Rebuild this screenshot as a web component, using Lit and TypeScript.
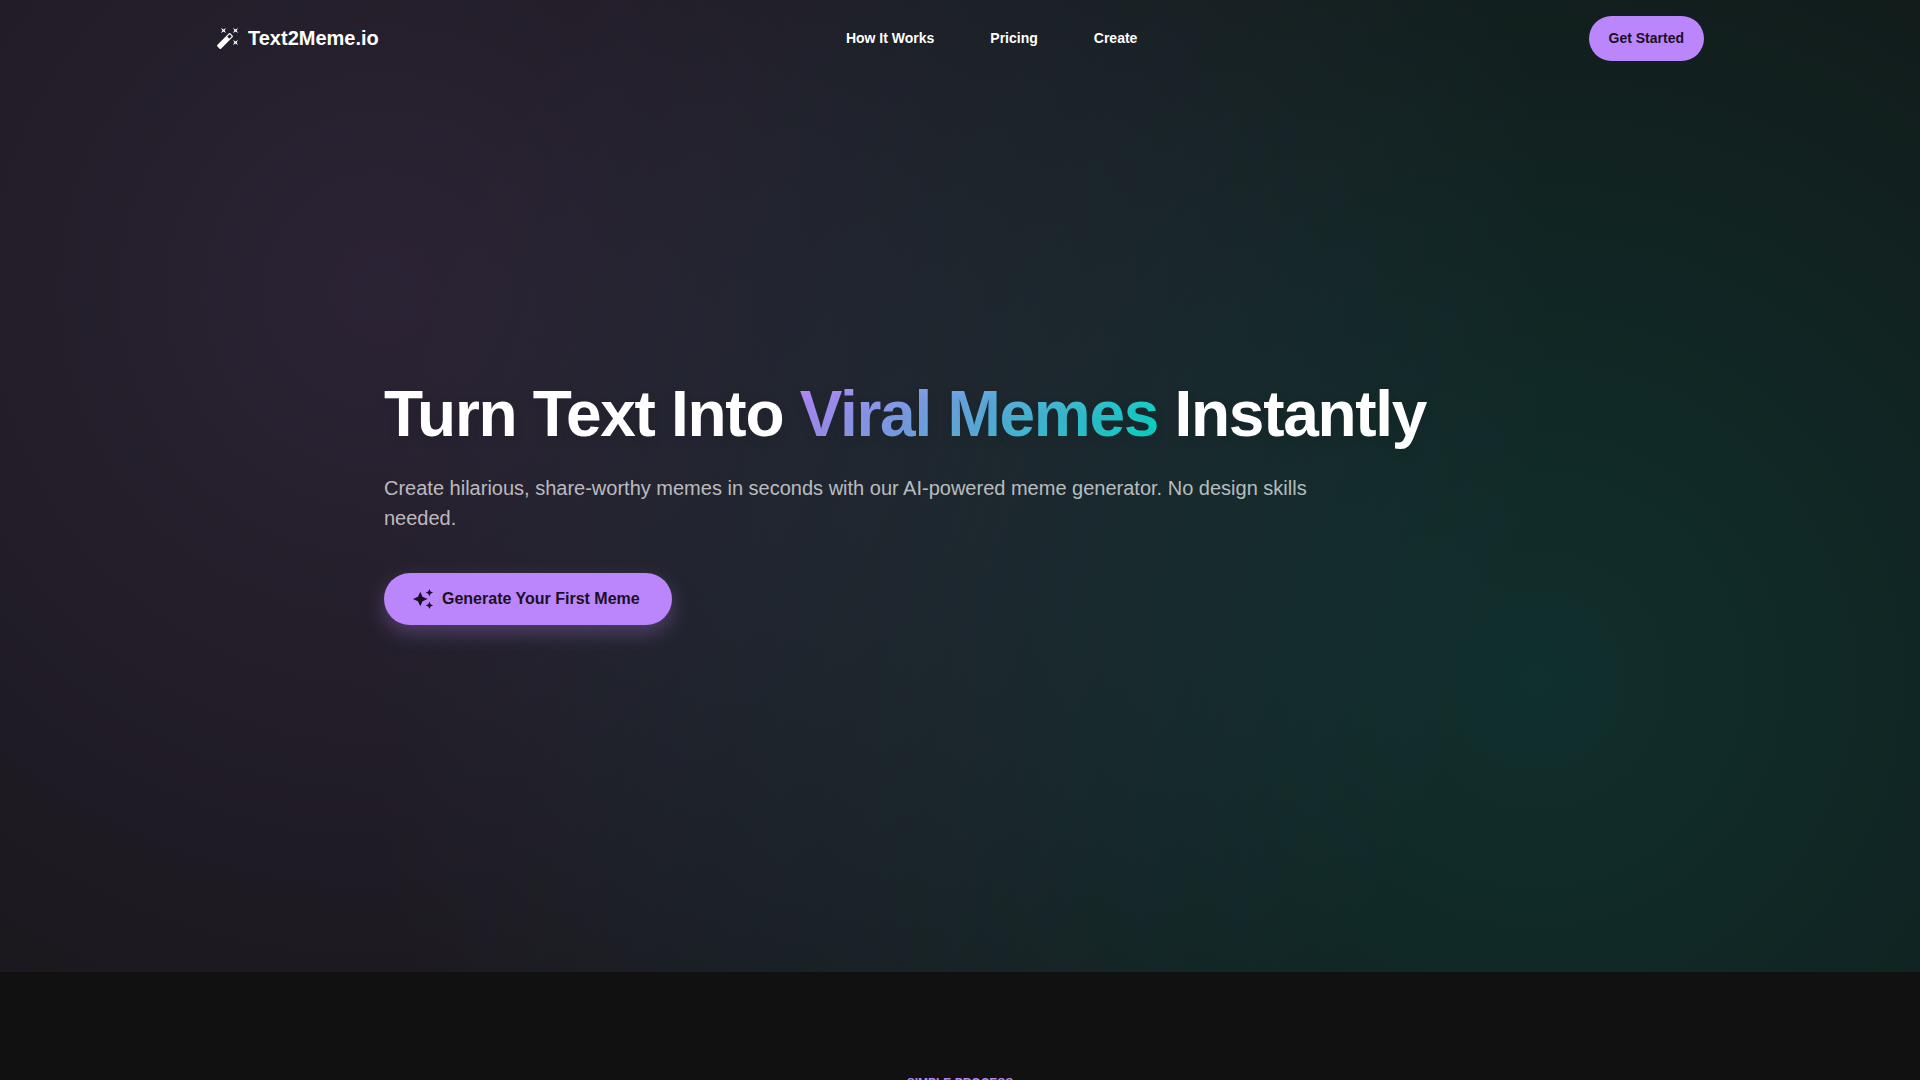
import { LitElement, html, css } from "lit";
import { customElement } from "lit/decorators.js";

@customElement("app-root")
export class AppRoot extends LitElement {
  static styles = css`
    :host {
      display: block;
      min-height: 100vh;
      background: #111111;
      color: #fff;
      font-family: "Liberation Sans", Arial, sans-serif;
      font-size: 16px;
    }
    * {
      box-sizing: border-box;
    }
    .page {
      height: 100vh;
      overflow: hidden;
    }
    .hero {
      display: flex;
      flex-direction: column;
      min-height: 90vh;
      background:
        radial-gradient(circle at 20% 30%, rgba(187, 134, 252, 0.15) 0%, transparent 70%),
        radial-gradient(circle at 80% 70%, rgba(3, 218, 198, 0.15) 0%, transparent 70%),
        #121212;
    }
    .bar {
      display: flex;
      justify-content: space-between;
      align-items: flex-start;
      width: 100%;
      max-width: 1536px;
      margin: 0 auto;
      padding: 16px 24px;
    }
    .brand {
      display: flex;
      align-items: center;
      gap: 8px;
      height: 44px;
      margin-right: 16px;
      color: inherit;
      font-size: 20px;
      line-height: 24px;
      font-weight: 700;
      text-decoration: none;
    }
    .brand svg {
      width: 24px;
      height: 24px;
      fill: currentColor;
    }
    .links {
      display: flex;
      gap: 56px;
      font-size: 14px;
      line-height: 24px;
      font-weight: 700;
    }
    .links a {
      padding: 10px 0;
      color: inherit;
      text-decoration: none;
    }
    button {
      border: 0;
      background: #bb86fc;
      color: #1a1025;
      font-family: inherit;
      font-weight: 700;
      cursor: pointer;
    }
    .start {
      padding: 10px 20px 11px;
      border-radius: 24px;
      font-size: 14px;
      line-height: 24px;
    }
    .intro {
      flex: 1;
      display: flex;
      flex-direction: column;
      justify-content: center;
      align-items: flex-start;
      width: 100%;
      max-width: 1200px;
      margin: 0 auto;
      padding: 0 24px 46px;
    }
    h1 {
      margin: 0 0 24px;
      font-size: 64px;
      line-height: 70px;
      letter-spacing: -0.02em;
      font-weight: 700;
      text-shadow: 0 4px 12px rgba(0, 0, 0, 0.1);
    }
    .accent {
      background: linear-gradient(135deg, #bb86fc 0%, #03dac6 100%);
      background-clip: text;
      -webkit-background-clip: text;
      color: transparent;
    }
    .lead {
      max-width: 960px;
      margin: 0 0 40px;
      font-size: 20px;
      line-height: 30px;
      color: rgba(255, 255, 255, 0.7);
    }
    .generate {
      display: flex;
      align-items: center;
      gap: 8px;
      height: 52px;
      padding: 0 32px 0 28px;
      border-radius: 26px;
      font-size: 16px;
      box-shadow: 0 8px 20px rgba(187, 134, 252, 0.3);
    }
    .generate svg {
      width: 22px;
      height: 22px;
      fill: currentColor;
    }
    .process {
      padding: 96px 24px;
      text-align: center;
    }
    .overline {
      margin: 0;
      color: #bb86fc;
      font-size: 12px;
      line-height: 30px;
      font-weight: 700;
      text-transform: uppercase;
    }
  `;

  render() {
    return html`
      <div class="page">
        <section class="hero">
          <header class="bar">
            <a class="brand" href="#top">
              <svg viewBox="0 0 24 24" aria-hidden="true">
                <path d="M7.5 5.6 10 7 8.6 4.5 10 2 7.5 3.4 5 2l1.4 2.5L5 7zm12 9.8L17 14l1.4 2.5L17 19l2.5-1.4L22 19l-1.4-2.5L22 14zM22 2l-2.5 1.4L17 2l1.4 2.5L17 7l2.5-1.4L22 7l-1.4-2.5zm-7.63 5.29a.9959.9959 0 0 0-1.41 0L1.29 18.96c-.39.39-.39 1.02 0 1.41l2.34 2.34c.39.39 1.02.39 1.41 0L16.7 11.05c.39-.39.39-1.02 0-1.41l-2.33-2.35zm-1.03 5.49-2.12-2.12 2.44-2.44 2.12 2.12-2.44 2.44z" />
              </svg>
              <span>Text2Meme.io</span>
            </a>
            <nav class="links">
              <a href="#how">How It Works</a>
              <a href="#pricing">Pricing</a>
              <a href="#create">Create</a>
            </nav>
            <button class="start" type="button">Get Started</button>
          </header>
          <div class="intro">
            <h1>Turn Text Into <span class="accent">Viral Memes</span> Instantly</h1>
            <p class="lead">
              Create hilarious, share-worthy memes in seconds with our AI-powered meme generator. No design skills
              needed.
            </p>
            <button class="generate" type="button">
              <svg viewBox="0 0 24 24" aria-hidden="true">
                <path d="m19 9 1.25-2.75L23 5l-2.75-1.25L19 1l-1.25 2.75L15 5l2.75 1.25L19 9zm-7.5.5L9 4 6.5 9.5 1 12l5.5 2.5L9 20l2.5-5.5L17 12l-5.5-2.5zM19 15l-1.25 2.75L15 19l2.75 1.25L19 23l1.25-2.75L23 19l-2.75-1.25L19 15z" />
              </svg>
              Generate Your First Meme
            </button>
          </div>
        </section>
        <section class="process" id="how">
          <p class="overline">Simple Process</p>
        </section>
      </div>
    `;
  }
}
